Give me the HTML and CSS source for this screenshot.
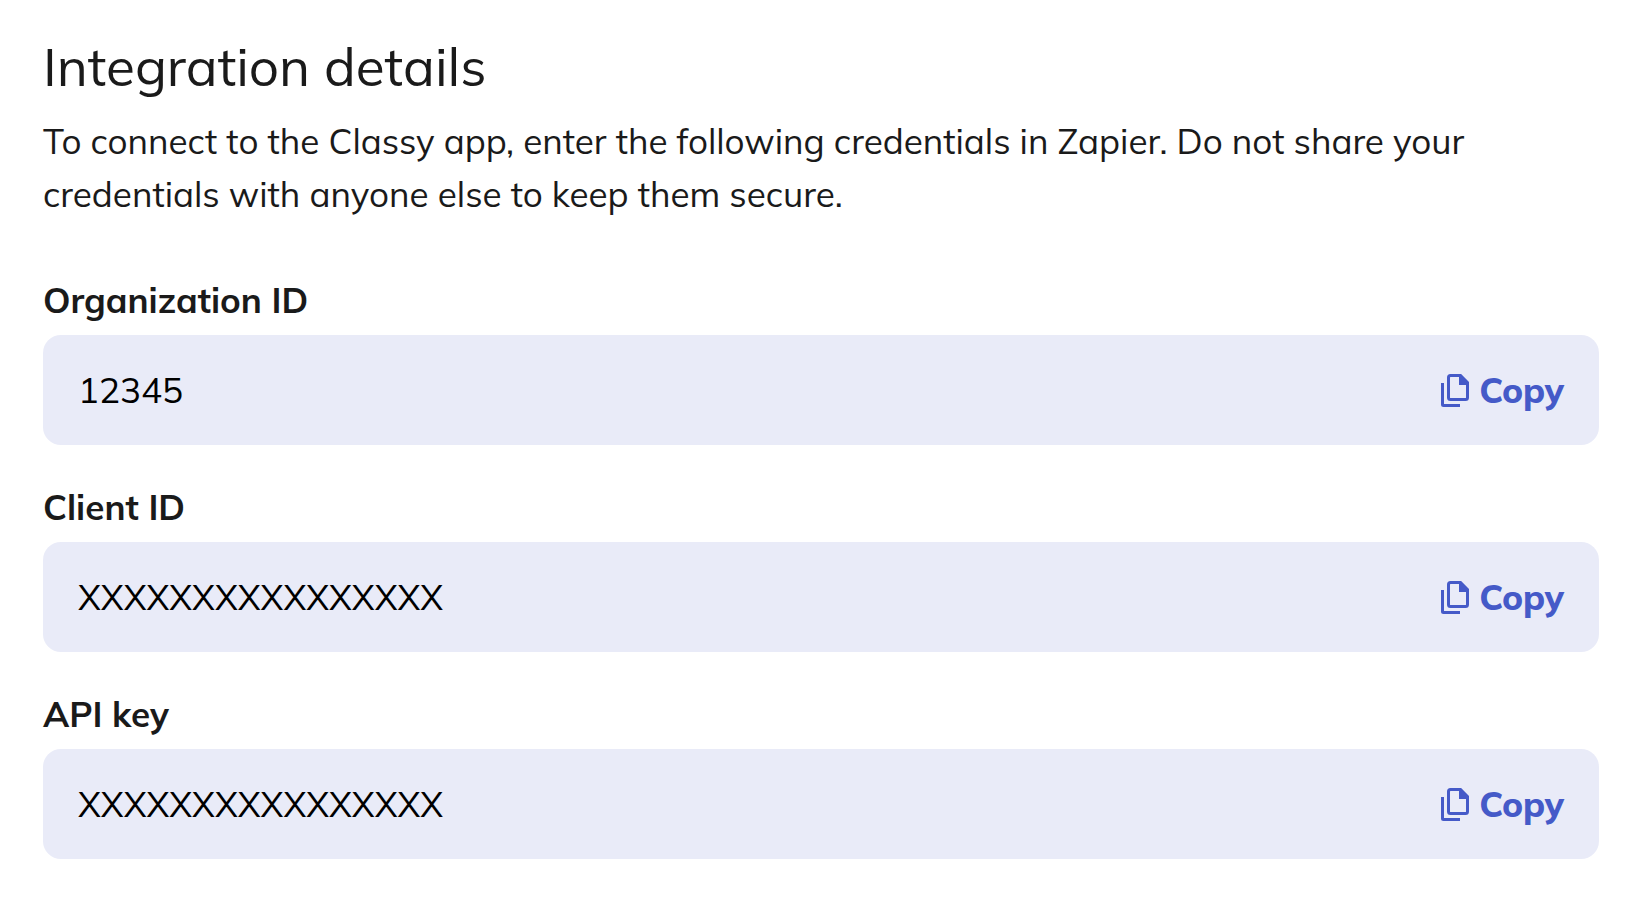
FILE: index.html
```html
<!DOCTYPE html>
<html lang="en">
<head>
<meta charset="utf-8">
<meta name="viewport" content="width=device-width, initial-scale=1">
<title>Integration details</title>
<link rel="stylesheet" href="styles.css">
</head>
<body>
<svg width="0" height="0" class="sprite" aria-hidden="true">
  <symbol id="copy-icon" viewBox="0 0 28 34">
    <path class="icon-line" d="M1.5 10V31.5a1 1 0 0 0 1 1H19"/>
    <path class="icon-line" d="M9.5 2.5H19.5L26.5 9.5V24.500a2 2 0 0 1-2 2H9.500a2 2 0 0 1-2-2V4.500a2 2 0 0 1 2-2Z"/>
    <path class="icon-fold" d="M18 2H20L27 9V12H18Z"/>
  </symbol>
</svg>
<main class="panel">
  <h1 class="title">Integration details</h1>
  <p class="intro">To connect to the Classy app, enter the following credentials in Zapier. Do not share your credentials with anyone else to keep them secure.</p>
  <div class="fields">
    <div class="field">
      <label class="label" for="organization-id">Organization ID</label>
      <div class="box">
        <input class="value" id="organization-id" type="text" value="12345" readonly>
        <button class="copy" type="button"><svg class="icon" aria-hidden="true"><use href="#copy-icon"/></svg>Copy</button>
      </div>
    </div>
    <div class="field">
      <label class="label" for="client-id">Client ID</label>
      <div class="box">
        <input class="value" id="client-id" type="text" value="XXXXXXXXXXXXXXXX" readonly>
        <button class="copy" type="button"><svg class="icon" aria-hidden="true"><use href="#copy-icon"/></svg>Copy</button>
      </div>
    </div>
    <div class="field">
      <label class="label" for="api-key">API key</label>
      <div class="box">
        <input class="value" id="api-key" type="text" value="XXXXXXXXXXXXXXXX" readonly>
        <button class="copy" type="button"><svg class="icon" aria-hidden="true"><use href="#copy-icon"/></svg>Copy</button>
      </div>
    </div>
  </div>
</main>
</body>
</html>
```
FILE: styles.css
```css
* {
  box-sizing: border-box;
}

body {
  margin: 0;
  background: #fff;
  color: #1a1a1a;
  font-family: Mulish, Muli, Lato, sans-serif;
  font-size: 35px;
}

.sprite {
  position: absolute;
}

.panel {
  padding: 34px 35px 46px 43px;
}

.title {
  margin: 0;
  font-size: 53px;
  font-weight: 400;
  line-height: 64px;
}

.intro {
  margin: 17px 0 0;
  line-height: 53px;
}

.fields {
  display: grid;
  gap: 40px;
  margin: 57px 2px 0 0;
}

.field {
  display: grid;
  gap: 12px;
}

.label {
  justify-self: start;
  font-weight: 700;
  line-height: 45px;
}

.box {
  display: flex;
  align-items: center;
  gap: 24px;
  padding: 25px 35px;
  border-radius: 18px;
  background: #e9ebf8;
}

.value {
  flex: 1;
  min-width: 0;
  height: 60px;
  padding: 0;
  border: 0;
  outline: 0;
  background: transparent;
  color: #000;
  font: inherit;
}

.copy {
  display: flex;
  align-items: center;
  gap: 10px;
  padding: 0;
  border: 0;
  background: none;
  color: #455ac8;
  font: inherit;
  font-weight: 800;
  cursor: pointer;
}

.icon {
  width: 28px;
  height: 34px;
}

.icon-line {
  fill: none;
  stroke: currentColor;
  stroke-width: 3;
}

.icon-fold {
  fill: currentColor;
}
```
